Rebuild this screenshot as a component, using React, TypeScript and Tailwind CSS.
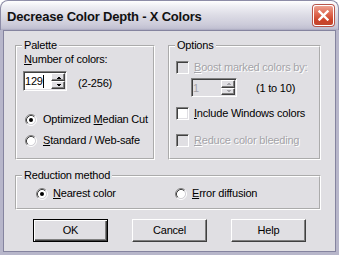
import React from 'react';

// classic 3d edges
const sunken =
  'border border-t-[#808080] border-l-[#808080] border-b-white border-r-white shadow-[inset_1px_1px_0_#404040,inset_-1px_-1px_0_#e0dfe3]';
const raised =
  'border border-t-white border-l-white border-b-[#404040] border-r-[#404040] shadow-[inset_-1px_-1px_0_#808080]';
const disabledText = 'text-[#a4a3a8] [text-shadow:1px_1px_0_#ffffff]';

const Group: React.FC<{ label: string; className: string; children: React.ReactNode }> = ({
  label,
  className,
  children,
}) => (
  <fieldset className={`border-2 border-white [border-style:groove] ${className}`}>
    <legend className="ml-[5px] px-[2px] leading-[13px]">{label}</legend>
    {children}
  </fieldset>
);

const Radio: React.FC<{ checked?: boolean }> = ({ checked }) => (
  <svg width="12" height="12" viewBox="0 0 12 12" className="shrink-0">
    <circle cx="6" cy="6" r="4.2" fill="#ffffff" />
    <path d="M2.11 9.89 A5.5 5.5 0 0 1 9.89 2.11" fill="none" stroke="#808080" />
    <path d="M9.89 2.11 A5.5 5.5 0 0 1 2.11 9.89" fill="none" stroke="#ffffff" />
    <path d="M2.82 9.18 A4.5 4.5 0 0 1 9.18 2.82" fill="none" stroke="#404040" />
    <path d="M9.18 2.82 A4.5 4.5 0 0 1 2.82 9.18" fill="none" stroke="#d4d3d8" />
    {checked && <circle cx="6" cy="6" r="2" fill="#000000" />}
  </svg>
);

const Check: React.FC<{ disabled?: boolean }> = ({ disabled }) => (
  <div className={`w-[13px] h-[13px] shrink-0 ${sunken} ${disabled ? 'bg-[#e0dfe3]' : 'bg-white'}`} />
);

const Arrow: React.FC<{ up?: boolean; color: string }> = ({ up, color }) => (
  <svg width="5" height="3" viewBox="0 0 5 3" shapeRendering="crispEdges">
    <polygon points={up ? '0,3 5,3 2.5,0.5' : '0,0 5,0 2.5,2.5'} fill={color} />
  </svg>
);

const SpinEdit: React.FC<{ value: string; disabled?: boolean; className: string }> = ({
  value,
  disabled,
  className,
}) => {
  const arrow = disabled ? '#a4a3a8' : '#000000';
  return (
    <div className={`flex shrink-0 ${sunken} ${disabled ? 'bg-[#e0dfe3]' : 'bg-white'} ${className}`}>
      <div className="flex-1 flex items-center pl-[1px] pt-[1px]">
        <span className={disabled ? 'text-[#a4a3a8]' : ''}>{value}</span>
        {!disabled && <span className="w-[1px] h-[13px] bg-black" />}
      </div>
      <div className="w-[15px] flex flex-col p-[1px] pl-0">
        <div className={`flex-1 flex items-center justify-center bg-[#e0dfe3] ${raised}`}>
          <Arrow up color={arrow} />
        </div>
        <div className={`flex-1 flex items-center justify-center bg-[#e0dfe3] ${raised}`}>
          <Arrow color={arrow} />
        </div>
      </div>
    </div>
  );
};

const Button: React.FC<{ label: string; isDefault?: boolean }> = ({ label, isDefault }) => (
  <div
    className={`w-[75px] h-[23px] flex items-center justify-center bg-[#e0dfe3] ${
      isDefault
        ? 'border border-black shadow-[inset_1px_1px_0_#ffffff,inset_-1px_-1px_0_#404040,inset_-2px_-2px_0_#808080]'
        : raised
    }`}
  >
    {label}
  </div>
);

export default function App() {
  return (
    <div className="w-[339px] h-[255px] bg-white font-['Liberation_Sans',Arial,sans-serif] text-[11px] leading-[13px] tracking-[-0.2px] text-black">
      <div className="flex flex-col w-full h-full">
        {/* title bar */}
        <div className="flex h-[30px] shrink-0 items-start justify-between pl-[6px] pr-[4px] rounded-t-[8px] border border-b-0 border-[#8d8ca7] bg-[linear-gradient(to_bottom,#ffffff_0%,#efeff4_18%,#dcdbe5_50%,#cdccda_80%,#c2c1d2_94%,#a9a8be_100%)]">
          <span className="mt-[8px] text-[13px] leading-[15px] font-bold text-[#111111]">
            Decrease Color Depth - X Colors
          </span>
          <div className="mt-[4px] w-[21px] h-[21px] rounded-[3px] border border-white bg-[linear-gradient(to_bottom,#eda190_0%,#df6a53_40%,#cc4329_75%,#c2482f_100%)] shadow-[0_0_0_1px_#b8554a] flex items-center justify-center">
            <svg width="11" height="11" viewBox="0 0 11 11">
              <path d="M1.5 1.5 L9.5 9.5 M9.5 1.5 L1.5 9.5" stroke="#ffffff" strokeWidth="2.4" strokeLinecap="square" />
            </svg>
          </div>
        </div>

        {/* body */}
        <div className="flex-1 flex flex-col bg-[#e0dfe3] border-x-[3px] border-b-[3px] border-[#b7b6ca] shadow-[inset_0_0_0_1px_#85849f] pl-[12px] pt-[9px]">
          <div className="flex gap-[13px]">
            <Group label="Palette" className="w-[140px] h-[121px]">
              <div className="pl-[7px] mt-[1px]">
                <u>N</u>umber of colors:
              </div>
              <div className="flex items-start mt-[5px] pl-[6px]">
                <SpinEdit value="129" className="w-[44px] h-[20px]" />
                <span className="ml-[11px] mt-[6px]">(2-256)</span>
              </div>
              <div className="flex items-center gap-[6px] mt-[22px] pl-[8px]">
                <Radio checked />
                <span>
                  Optimized <u>M</u>edian Cut
                </span>
              </div>
              <div className="flex items-center gap-[6px] mt-[8px] pl-[8px]">
                <Radio />
                <span>
                  <u>S</u>tandard / Web-safe
                </span>
              </div>
            </Group>

            <Group label="Options" className="w-[153px] h-[121px]">
              <div className="flex items-center gap-[5px] mt-[9px] pl-[6px]">
                <Check disabled />
                <span className={disabledText}>
                  <u>B</u>oost marked colors by:
                </span>
              </div>
              <div className="flex items-start mt-[4px] pl-[21px]">
                <SpinEdit value="1" disabled className="w-[46px] h-[19px]" />
                <span className="ml-[19px] mt-[4px]">(1 to 10)</span>
              </div>
              <div className="flex items-center gap-[5px] mt-[10px] pl-[6px]">
                <Check />
                <span>
                  <u>I</u>nclude Windows colors
                </span>
              </div>
              <div className="flex items-center gap-[5px] mt-[14px] pl-[6px]">
                <Check disabled />
                <span className={disabledText}>
                  <u>R</u>educe color bleeding
                </span>
              </div>
            </Group>
          </div>

          <Group label="Reduction method" className="w-[306px] h-[41px] mt-[9px]">
            <div className="flex items-center mt-[5px] pl-[19px]">
              <div className="w-[139px] flex items-center gap-[5px]">
                <Radio checked />
                <span>
                  <u>N</u>earest color
                </span>
              </div>
              <div className="flex items-center gap-[5px]">
                <Radio />
                <span>
                  <u>E</u>rror diffusion
                </span>
              </div>
            </div>
          </Group>

          <div className="flex gap-[24px] mt-[9px] pl-[18px]">
            <Button label="OK" isDefault />
            <Button label="Cancel" />
            <Button label="Help" />
          </div>
        </div>
      </div>
    </div>
  );
}
